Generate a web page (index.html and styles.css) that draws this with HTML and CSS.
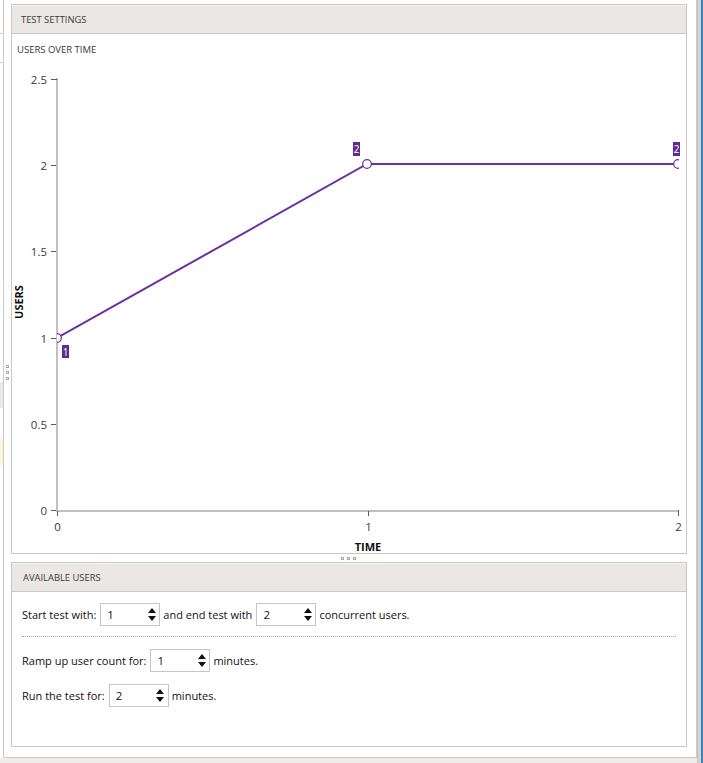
FILE: index.html
```html
<!DOCTYPE html>
<html lang="en">
<head>
<meta charset="utf-8">
<title>Test Settings</title>
<link rel="stylesheet" href="styles.css">
</head>
<body>
<div class="screen">
  <div class="leftcol">
    <div class="upper">
      <div class="leftpane">
        <div class="lp-row lp-row1"></div>
        <div class="lp-row lp-row2"></div>
        <div class="lp-gap1"></div>
        <div class="lp-gray"></div>
        <div class="lp-gap2"></div>
        <div class="lp-yellow"></div>
      </div>
      <div class="container">
        <div class="vsplit"><i></i><i></i><i></i></div>
        <div class="panels">
          <section class="panel panel-chart">
            <div class="panel-header">Test Settings</div>
            <div class="chart-body">
              <div class="chart-title">Users over time</div>
              <svg class="chart" width="674" height="489" viewBox="12 64 674 489">
                <defs>
                  <clipPath id="plot"><rect x="57" y="60" width="622" height="460"/></clipPath>
                </defs>
                <g class="axis">
                  <line x1="57" y1="78" x2="57" y2="512"/>
                  <line x1="56" y1="511" x2="679" y2="511"/>
                </g>
                <g class="ticks">
                  <line x1="51" y1="79.5" x2="57" y2="79.5"/>
                  <line x1="51" y1="165.5" x2="56" y2="165.5"/>
                  <line x1="51" y1="251.5" x2="56" y2="251.5"/>
                  <line x1="51" y1="338.5" x2="56" y2="338.5"/>
                  <line x1="51" y1="424.5" x2="56" y2="424.5"/>
                  <line x1="51" y1="510.5" x2="56" y2="510.5"/>
                  <line x1="57.5" y1="511" x2="57.5" y2="516"/>
                  <line x1="368.5" y1="511" x2="368.5" y2="516"/>
                  <line x1="678.5" y1="510" x2="678.5" y2="516"/>
                </g>
                <g class="ylabels">
                  <text x="47" y="83.5">2.5</text>
                  <text x="47" y="169.5">2</text>
                  <text x="47" y="256">1.5</text>
                  <text x="47" y="342.5">1</text>
                  <text x="47" y="429">0.5</text>
                  <text x="47" y="515">0</text>
                </g>
                <g class="xlabels">
                  <text x="57.5" y="530.5">0</text>
                  <text x="368.5" y="530.5">1</text>
                  <text x="678.5" y="530.5">2</text>
                </g>
                <text class="axis-title" x="368" y="551">TIME</text>
                <text class="axis-title" x="23" y="302" transform="rotate(-90 23 302)">USERS</text>
                <g clip-path="url(#plot)">
                  <polyline class="series" points="57,338 367,164 678,164"/>
                  <circle class="marker" cx="57" cy="338" r="4.3"/>
                  <circle class="marker" cx="367" cy="164" r="4.3"/>
                  <circle class="marker" cx="678" cy="164" r="4.3"/>
                </g>
                <g class="dlabel">
                  <rect x="62" y="345" width="7" height="13"/>
                  <text x="65.5" y="355.5">1</text>
                  <rect x="353" y="142" width="7" height="14"/>
                  <text x="356.5" y="153">2</text>
                  <rect x="673" y="142" width="7" height="14"/>
                  <text x="676.5" y="153">2</text>
                </g>
              </svg>
            </div>
          </section>
          <div class="hsplit"><i></i><i></i><i></i></div>
          <section class="panel panel-users">
            <div class="panel-header">Available Users</div>
            <div class="users-body">
              <div class="form-row">
                <span>Start test with:</span>
                <div class="spinner"><span class="value">1</span><span class="arrows"><b class="up"></b><b class="down"></b></span></div>
                <span>and end test with</span>
                <div class="spinner"><span class="value">2</span><span class="arrows"><b class="up"></b><b class="down"></b></span></div>
                <span>concurrent users.</span>
              </div>
              <div class="sep"></div>
              <div class="form-row">
                <span>Ramp up user count for:</span>
                <div class="spinner"><span class="value">1</span><span class="arrows"><b class="up"></b><b class="down"></b></span></div>
                <span>minutes.</span>
              </div>
              <div class="form-row row-gap">
                <span>Run the test for:</span>
                <div class="spinner"><span class="value">2</span><span class="arrows"><b class="up"></b><b class="down"></b></span></div>
                <span>minutes.</span>
              </div>
            </div>
          </section>
        </div>
      </div>
    </div>
    <div class="band"></div>
  </div>
  <div class="rightstrip"><div class="rs-gray"></div><div class="rs-blue"></div></div>
</div>
</body>
</html>
```

FILE: styles.css
```css
* { box-sizing: border-box; }
html, body { margin: 0; padding: 0; background: #fff; }
body {
  font-family: "Open Sans", "Noto Sans", sans-serif;
  color: #1a1a1a;
  width: 703px;
  height: 763px;
  overflow: hidden;
}
.screen { display: flex; width: 703px; height: 763px; }
.leftcol { width: 697px; display: flex; flex-direction: column; }
.upper { flex: 1; display: flex; min-height: 0; }
.band { height: 5px; background: #efecea; }

.leftpane { width: 3px; display: flex; flex-direction: column; }
.lp-row { border-bottom: 1px solid #d2d2d2; }
.lp-row1 { height: 34px; }
.lp-row2 { height: 29px; }
.lp-gap1 { height: 319px; }
.lp-gray { height: 26px; background: #ebe7e4; }
.lp-gap2 { height: 29px; }
.lp-yellow { height: 28px; background: #fcf6da; }

.container {
  width: 694px;
  border-left: 1px solid #cacaca;
  border-right: 1px solid #cacaca;
  border-bottom: 1px solid #cacaca;
  padding: 4px 9px 10px 0;
  display: flex;
}
.vsplit {
  width: 7px;
  display: flex;
  flex-direction: column;
  align-items: center;
  justify-content: center;
  gap: 3px;
  padding-bottom: 6px;
}
.vsplit i, .hsplit i {
  display: block;
  width: 3px;
  height: 3px;
  border: 1px solid #a8a8a8;
  background: #fff;
}
.panels { width: 676px; display: flex; flex-direction: column; }
.hsplit {
  height: 8px;
  display: flex;
  align-items: center;
  justify-content: center;
  gap: 3px;
  padding-right: 2px;
}

.panel { border: 1px solid #c9c9c9; display: flex; flex-direction: column; background: #fff; }
.panel-chart { height: 550px; }
.panel-users { height: 185px; }
.panel-header {
  height: 29px;
  flex: none;
  background: #ebe7e4;
  border-bottom: 1px solid #c9c9c9;
  box-shadow: inset 0 1px 0 #f7f5f3;
  display: flex;
  align-items: center;
  padding-left: 9px;
  padding-top: 1px;
  font-size: 9.4px;
  text-transform: uppercase;
  color: #3a3a3a;
}
.panel-users .panel-header { padding-left: 11px; }

.chart-body { flex: 1; display: flex; flex-direction: column; }
.chart-title {
  height: 30px;
  padding: 10px 0 0 5px;
  line-height: 12px;
  font-size: 9.5px;
  text-transform: uppercase;
  color: #3a3a3a;
}
.chart { display: block; font-family: "Open Sans", "Noto Sans", sans-serif; }
.axis line { stroke: #c0c0c0; stroke-width: 2; }
.ticks line { stroke: #5a5a5a; stroke-width: 1; }
.ylabels text { font-size: 11.5px; fill: #3a3a3a; text-anchor: end; }
.xlabels text { font-size: 11.5px; fill: #3a3a3a; text-anchor: middle; }
.axis-title { font-size: 11px; font-weight: 700; fill: #111; text-anchor: middle; }
.series { fill: none; stroke: #6b2fa2; stroke-width: 2; }
.marker { fill: #fff; stroke: #6b2fa2; stroke-width: 1.2; }
.dlabel rect { fill: #5f2b92; }
.dlabel text { fill: #fff; font-size: 10px; text-anchor: middle; }

.users-body { flex: 1; padding: 11px 10px 0 10px; font-size: 11px; color: #111; }
.form-row { height: 23px; display: flex; align-items: center; white-space: nowrap; }
.row-gap { margin-top: 12px; }
.sep { margin: 10px 0 12px; border-top: 1px dotted #a8a8a8; }
.spinner {
  width: 60px;
  height: 23px;
  border: 1px solid #c6c6c6;
  margin: 0 3px 0 4px;
  display: flex;
  align-items: center;
  justify-content: space-between;
}
.spinner .value { padding-left: 6px; font-size: 11.5px; }
.arrows {
  width: 13px;
  height: 21px;
  display: flex;
  flex-direction: column;
  align-items: center;
  justify-content: center;
  gap: 3px;
  margin-right: 1px;
}
.arrows b { display: block; width: 0; height: 0; border-left: 4px solid transparent; border-right: 4px solid transparent; }
.arrows .up { border-bottom: 5px solid #111; }
.arrows .down { border-top: 5px solid #111; }

.rightstrip { width: 6px; display: flex; }
.rs-gray { width: 4px; background: #d6d2ce; border-left: 1px solid #c4c0bc; }
.rs-blue { width: 2px; background: #3f80b8; }
```
